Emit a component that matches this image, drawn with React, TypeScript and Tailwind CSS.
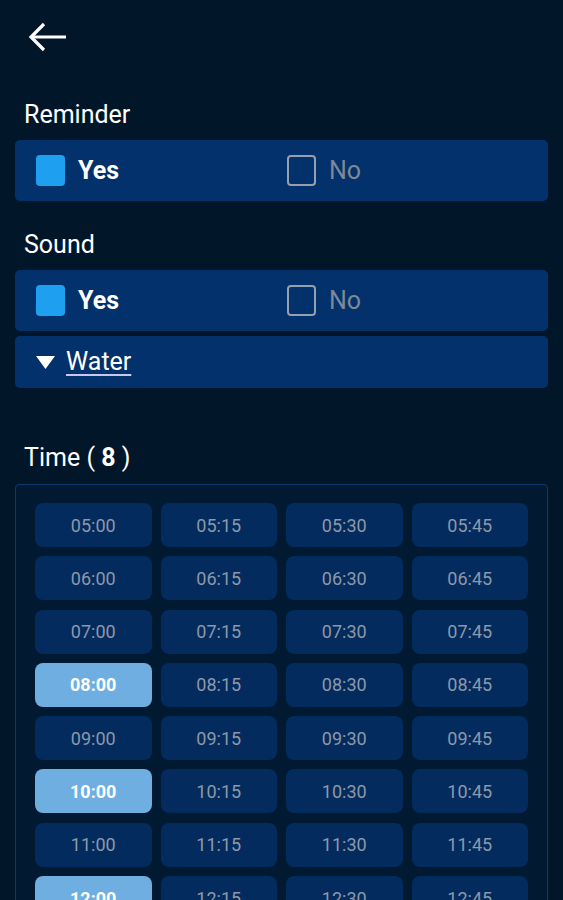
import { useState } from "react";

const FONT = { fontFamily: "Roboto, 'Liberation Sans', Arial, sans-serif" };

function buildTimes() {
    const out: string[] = [];
    for (let h = 5; h <= 14; h++) {
        for (const m of ["00", "15", "30", "45"]) {
            out.push(`${String(h).padStart(2, "0")}:${m}`);
        }
    }
    return out;
}

const TIMES = buildTimes();

function Check({ checked, label }: { checked: boolean; label: string }) {
    return (
        <div className="flex items-center gap-[13px]">
            {checked ? (
                <span className="block w-[29px] h-[31px] rounded-[4px] bg-[#1e9ff0]" />
            ) : (
                <span className="block w-[29px] h-[31px] rounded-[4px] border-2 border-[#959fb0]" />
            )}
            <span className={checked ? "text-[25px] font-bold text-white" : "text-[25px] text-[#7f8896]"}>{label}</span>
        </div>
    );
}

function YesNo() {
    return (
        <div className="flex items-center h-[61px] rounded-[5px] bg-[#03316b] pl-[21px]">
            <div className="w-[251px]">
                <Check checked label="Yes" />
            </div>
            <Check checked={false} label="No" />
        </div>
    );
}

export default function App() {
    const [selected] = useState<string[]>(["08:00", "10:00", "12:00", "14:00", "15:00", "16:00", "18:00", "20:00"]);

    return (
        <div className="h-screen overflow-hidden bg-[#02162a] text-white" style={FONT}>
            <div className="h-[100px] pt-[22px] pl-[28px]">
                <svg width="40" height="30" viewBox="0 0 40 30" fill="none" stroke="white" strokeWidth="3.2">
                    <path d="M3 15H38" />
                    <path d="M16 2L3 15L16 28" />
                </svg>
            </div>

            <div className="px-[15px]">
                <div className="pl-[9px] text-[25px] leading-[30px] mb-[10px]">Reminder</div>
                <YesNo />

                <div className="pl-[9px] text-[25px] leading-[30px] mt-[29px] mb-[10px]">Sound</div>
                <YesNo />

                <div className="mt-[5px] h-[52px] rounded-[5px] bg-[#03316b] flex items-center pl-[21px] gap-[11px]">
                    <svg width="19" height="13" viewBox="0 0 19 13">
                        <path d="M0 0H19L9.5 13Z" fill="white" />
                    </svg>
                    <span className="text-[25px] underline decoration-[#c9c6f2] underline-offset-[4px] decoration-2">Water</span>
                </div>

                <div className="pl-[9px] text-[25px] leading-[30px] mt-[55px]">
                    Time ( <span className="font-bold">8</span> )
                </div>

                <div className="mt-[11px] border border-[#0b3a6f] rounded-[4px] bg-[#021a31] px-[19px] pt-[18px] pb-[18px]">
                    <div className="grid grid-cols-4 gap-x-[9px] gap-y-[9.3px]">
                        {TIMES.map((t) => {
                            const on = selected.includes(t);
                            return (
                                <div
                                    key={t}
                                    className={
                                        on
                                            ? "h-[44px] rounded-[8px] bg-[#6eaee0] flex items-center justify-center text-[18px] font-bold text-white"
                                            : "h-[44px] rounded-[8px] bg-[#032b5d] flex items-center justify-center text-[18px] text-[#8d98aa]"
                                    }
                                >
                                    {t}
                                </div>
                            );
                        })}
                    </div>
                </div>
            </div>
        </div>
    );
}
